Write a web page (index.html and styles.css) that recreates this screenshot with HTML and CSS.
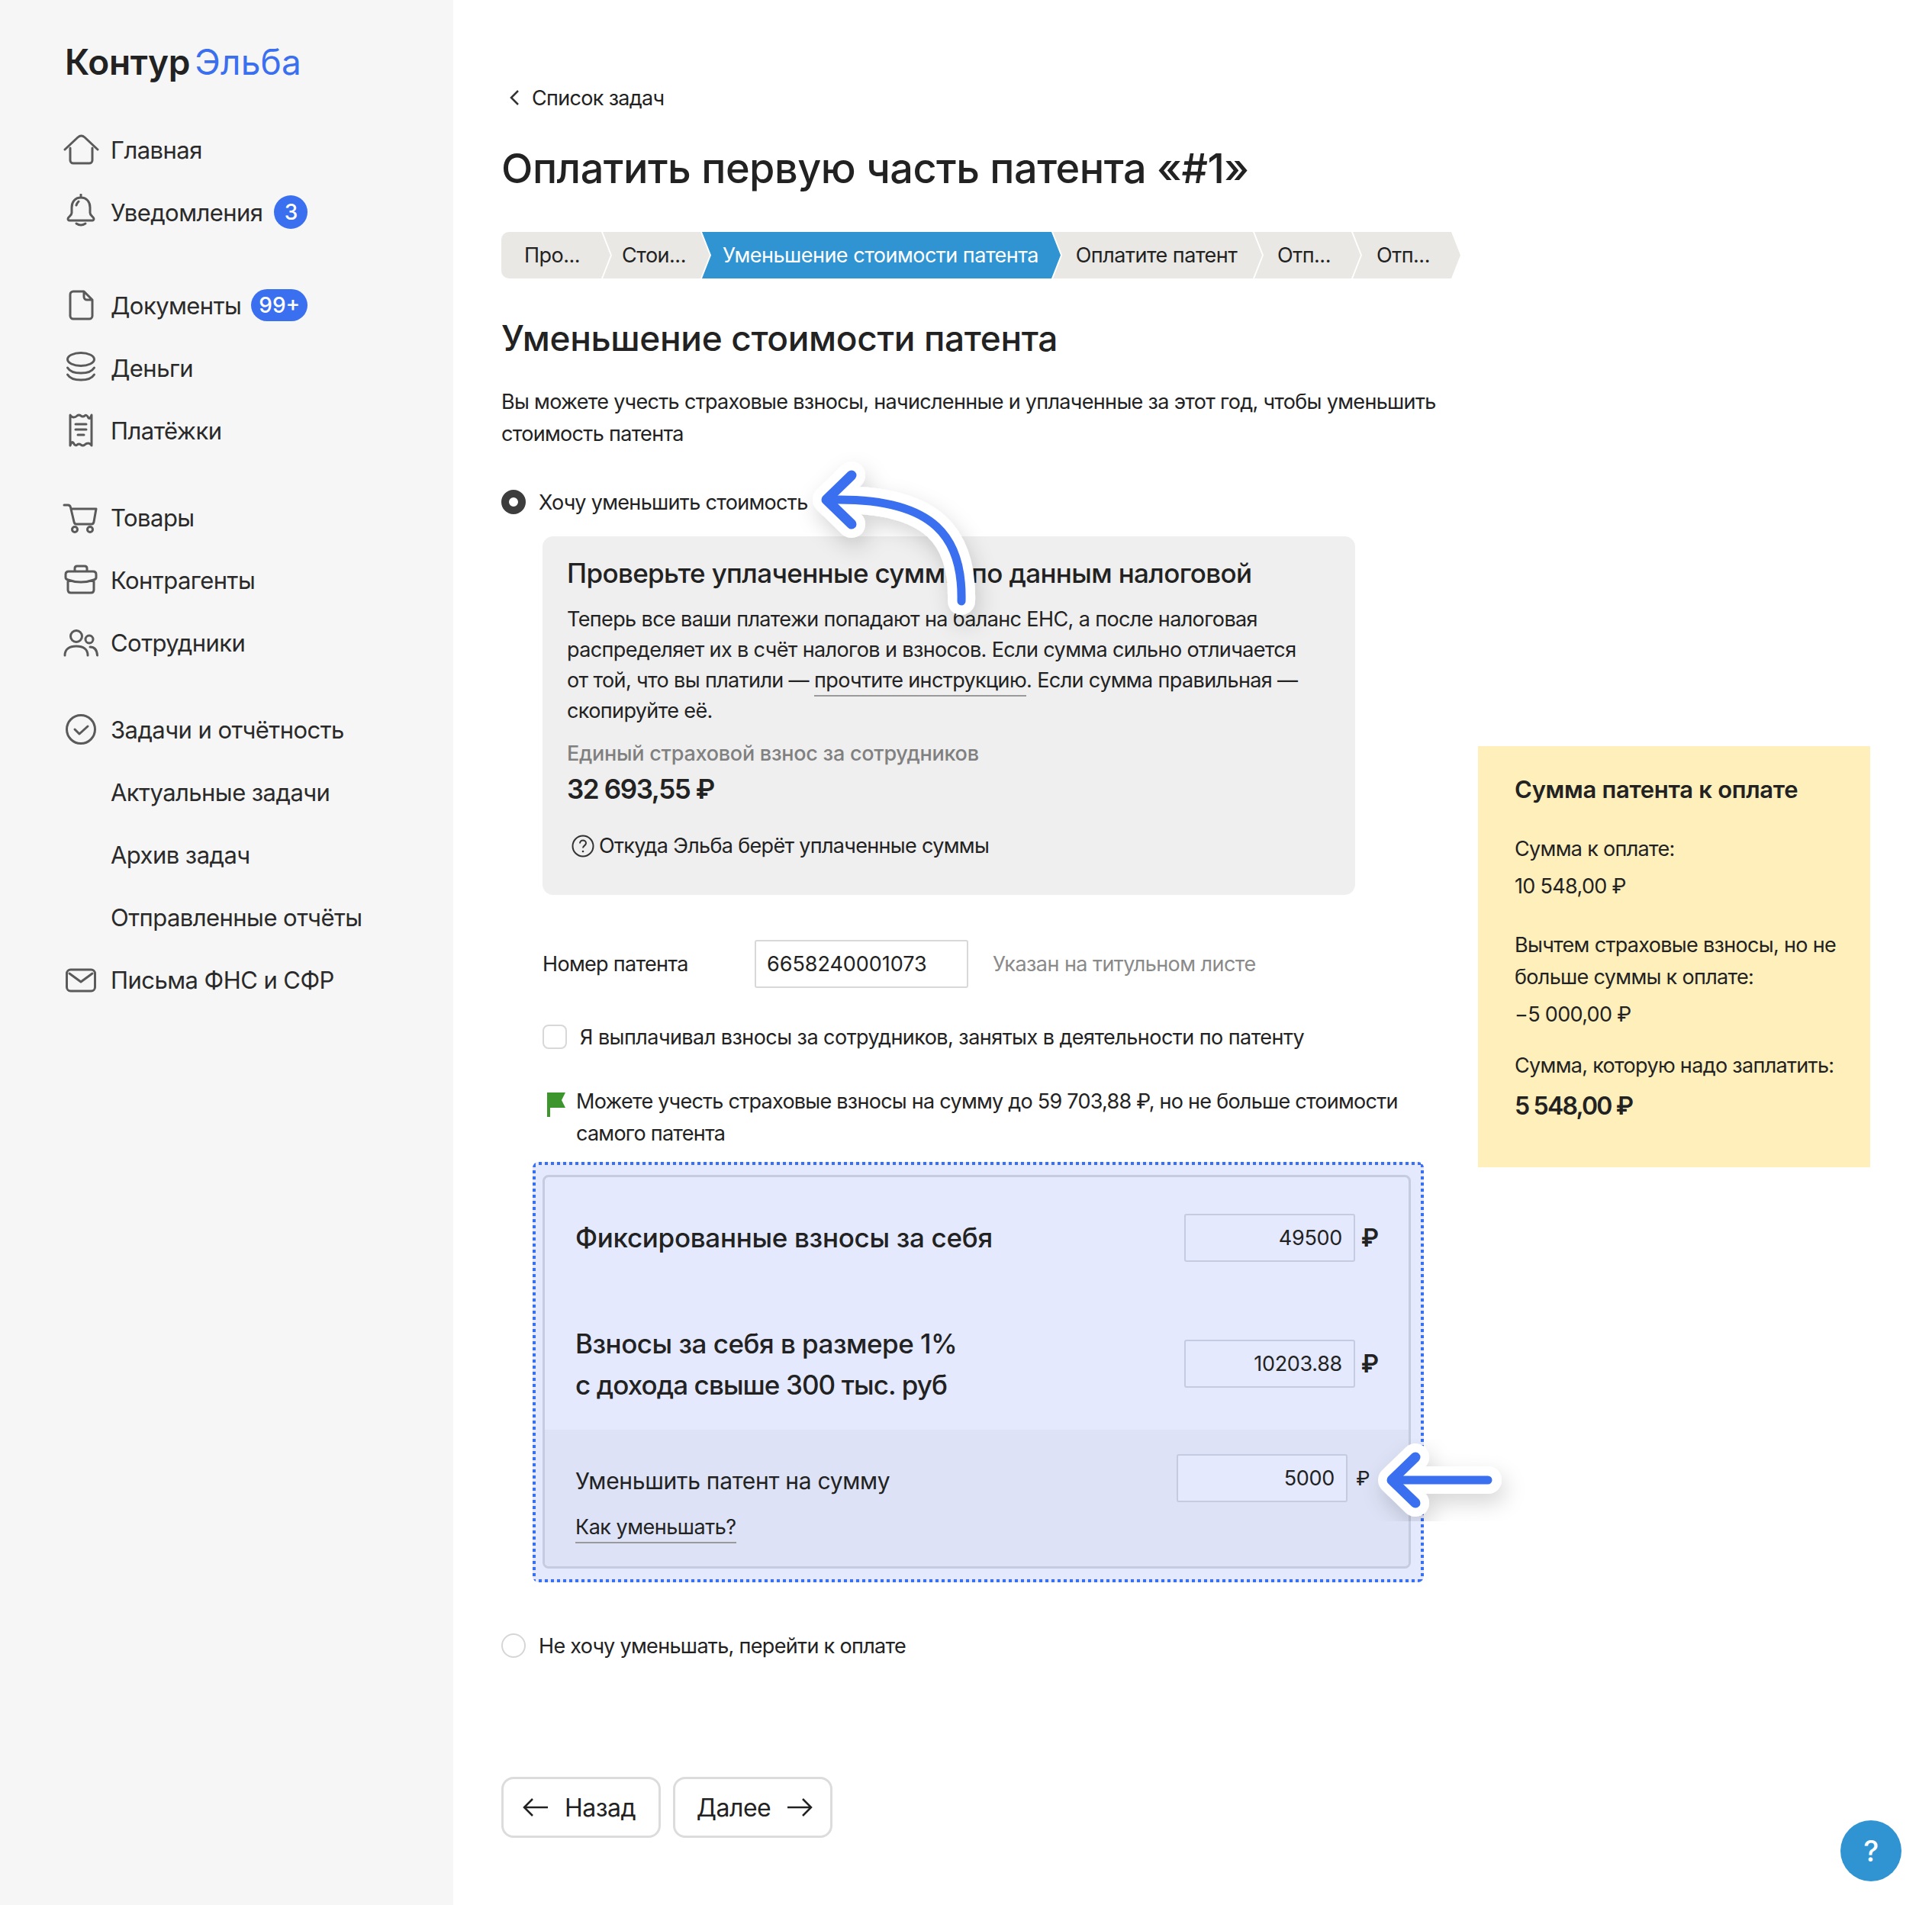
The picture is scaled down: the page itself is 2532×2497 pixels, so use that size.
FILE: index.html
```html
<!DOCTYPE html>
<html lang="ru">
<head>
<meta charset="utf-8">
<title>Контур Эльба</title>
<link rel="stylesheet" href="styles.css">
</head>
<body>
<div class="app">
  <aside class="sidebar">
    <div class="logo"><span class="logo-a">Контур</span><span class="logo-b">Эльба</span></div>
    <nav class="nav">
      <div class="nav-group">
        <a class="nav-item"><svg class="ico" viewBox="0 0 48 48"><path d="M3 24 20 8q4.500-4 9 0l17 16M10 22v16a4 4 0 0 0 4 4h21a4 4 0 0 0 4-4V22"/></svg>Главная</a>
        <a class="nav-item"><svg class="ico" viewBox="0 0 48 48"><path d="M24 1v4M24 5c-8 0-12 6-12 13v7c0 4-5 5-5 8 0 1 1 2 2 2h30c1 0 2-1 2-2 0-3-5-4-5-8v-7c0-7-4-13-12-13zM18 39q6 4 12 0M18 15q1-3 3-5"/></svg>Уведомления<span class="badge badge-round">3</span></a>
      </div>
      <div class="nav-group group-b">
        <a class="nav-item"><svg class="ico" viewBox="0 0 48 48"><path d="M14 6h14l11 11v21a4 4 0 0 1-4 4H14a4 4 0 0 1-4-4V10a4 4 0 0 1 4-4zM28 6v7a4 4 0 0 0 4 4h7"/></svg>Документы<span class="badge badge-wide">99+</span></a>
        <a class="nav-item"><svg class="ico" viewBox="0 0 48 48"><ellipse cx="24" cy="13" rx="17.500" ry="8.500"/><path d="M6.500 24c3 5 10 7 17.500 7s14.500-2 17.500-7M6.500 33c3 5 10 7 17.500 7s14.500-2 17.500-7"/></svg>Деньги</a>
        <a class="nav-item"><svg class="ico" viewBox="0 0 48 48"><path d="M10 4q2 3 4.500 3t4.500-2q2.500-2 5 0t5 0 4.500 2 4.500-3v40q-2-3-4.500-3t-4.500 2q-2.500 2-5 0t-5 0-4.500-2-4.500 3zM17 16h14M17 23h14M20 30h8"/></svg>Платёжки</a>
      </div>
      <div class="nav-group group-c">
        <a class="nav-item"><svg class="ico" viewBox="0 0 48 48"><path d="M2 8h5c2 0 3 1 3.500 3L15 30q.5 3 3 3h20q2.500 0 3-3l3-17H11"/><circle cx="16" cy="40" r="3.500"/><circle cx="36" cy="40" r="3.500"/></svg>Товары</a>
        <a class="nav-item"><svg class="ico" viewBox="0 0 48 48"><path d="M16 13V9q0-3 3-3h10q3 0 3 3v4M8 13h32q4 0 4 4v4q0 2-3 3-8 3-17 3T7 24q-3-1-3-3v-4q0-4 4-4zM7 24v13q0 4 4 4h26q4 0 4-4V24"/></svg>Контрагенты</a>
        <a class="nav-item"><svg class="ico" viewBox="0 0 48 48"><circle cx="18" cy="16" r="7.500"/><circle cx="35" cy="20" r="5"/><path d="M3 41c0-8 6-12 15-12s15 4 15 12M36 30c6 0 9 4 9.500 11"/></svg>Сотрудники</a>
      </div>
      <div class="nav-group group-d">
        <a class="nav-item"><svg class="ico" viewBox="0 0 48 48"><circle cx="24" cy="24" r="18.500"/><path d="M16 24l6 6 11-10"/></svg>Задачи и отчётность</a>
        <a class="nav-item sub">Актуальные задачи</a>
        <a class="nav-item sub">Архив задач</a>
        <a class="nav-item sub">Отправленные отчёты</a>
        <a class="nav-item"><svg class="ico" viewBox="0 0 48 48"><rect x="5.500" y="11" width="37" height="28" rx="5"/><path d="M9 16l15 11 15-11"/></svg>Письма ФНС и СФР</a>
      </div>
    </nav>
  </aside>

  <main class="main">
    <section class="content">
      <a class="back"><svg class="back-ico" viewBox="0 0 14 24"><path d="M12 3 3 12l9 9"/></svg>Список задач</a>
      <h1 class="title">Оплатить первую часть патента «#1»</h1>
      <div class="steps">
        <div class="step first s143">Про...</div>
        <div class="step s140 pr">Стои...</div>
        <div class="step active s470">Уменьшение стоимости патента</div>
        <div class="step s274 pr-s">Оплатите патент</div>
        <div class="step s139 pr-l">Отп...</div>
        <div class="step s141 pr-l">Отп...</div>
      </div>
      <h2 class="subtitle">Уменьшение стоимости патента</h2>
      <p class="intro">Вы можете учесть страховые взносы, начисленные и уплаченные за этот год, чтобы уменьшить стоимость патента</p>
      <label class="radio-row"><span class="radio on"></span>Хочу уменьшить стоимость</label>

      <div class="info">
        <h3 class="info-title">Проверьте уплаченные суммы по данным налоговой</h3>
        <p class="info-body">Теперь все ваши платежи попадают на баланс ЕНС, а после налоговая распределяет их в счёт налогов и взносов. Если сумма сильно отличается от той, что вы платили — <a class="link">прочтите инструкцию</a>. Если сумма правильная — скопируйте её.</p>
        <div class="info-label">Единый страховой взнос за сотрудников</div>
        <div class="info-amount">32 693,55 ₽</div>
        <div class="info-help"><svg class="help-ico" viewBox="0 0 32 32"><circle cx="16" cy="16" r="13.500"/><path d="M12 12.500c0-2.500 2-4 4-4s4 1.500 4 3.800c0 3-4 3.200-4 6.200"/><circle class="dot" cx="16" cy="23" r="1.300"/></svg>Откуда Эльба берёт уплаченные суммы</div>
      </div>

      <div class="patent">
        <span class="patent-label">Номер патента</span>
        <span class="input patent-input">6658240001073</span>
        <span class="hint">Указан на титульном листе</span>
      </div>
      <label class="check-row"><span class="check"></span>Я выплачивал взносы за сотрудников, занятых в деятельности по патенту</label>
      <div class="flag-row">
        <svg class="flag" viewBox="0 0 26 34"><path d="M1 1h24l-5 10 5 10H5v12H1z"/></svg>
        <p class="flag-text">Можете учесть страховые взносы на сумму до 59 703,88 ₽, но не больше стоимости самого патента</p>
      </div>

      <div class="dotted">
        <div class="calc">
          <div class="calc-row r1">
            <div class="calc-label">Фиксированные взносы за себя</div>
            <div class="field"><span class="input num">49500</span><span class="cur">₽</span></div>
          </div>
          <div class="calc-row r2">
            <div class="calc-label tighter">Взносы за себя в размере 1%<br><span class="tight">с дохода свыше 300 тыс. руб</span></div>
            <div class="field"><span class="input num">10203.88</span><span class="cur">₽</span></div>
          </div>
          <div class="calc-foot">
            <div class="foot-text">
              <div class="foot-label">Уменьшить патент на сумму</div>
              <a class="link foot-link">Как уменьшать?</a>
            </div>
            <div class="field small"><span class="input num light">5000</span><span class="cur thin">₽</span></div>
          </div>
        </div>
      </div>

      <label class="radio-row second"><span class="radio"></span>Не хочу уменьшать, перейти к оплате</label>

      <div class="buttons">
        <button class="btn btn-back"><svg class="arr" viewBox="0 0 36 28"><path d="M14 3 3 14l11 11M3 14h31"/></svg>Назад</button>
        <button class="btn btn-next"><span>Далее</span><svg class="arr" viewBox="0 0 36 28"><path d="M22 3l11 11-11 11M33 14H2"/></svg></button>
      </div>
    </section>

    <aside class="sum">
      <h3 class="sum-title">Сумма патента к оплате</h3>
      <p class="sum-line l1">Сумма к оплате:</p>
      <p class="sum-line l2">10 548,00 ₽</p>
      <p class="sum-line l3">Вычтем страховые взносы, но не больше суммы к оплате:</p>
      <p class="sum-line l2">−5 000,00 ₽</p>
      <p class="sum-line l4">Сумма, которую надо заплатить:</p>
      <p class="sum-total">5 548,00 ₽</p>
    </aside>
  </main>
</div>

<svg class="overlay" viewBox="0 0 2532 2497" aria-hidden="true">
  <defs><filter id="sh" x="-40%" y="-40%" width="180%" height="180%"><feDropShadow dx="5" dy="12" stdDeviation="14" flood-color="#000" flood-opacity=".16"/></filter></defs>
  <path class="ow" filter="url(#sh)" d="M1260 788C1262 705 1225 655 1100 655H1083M1116 623 1083 655 1116 687"/>
  <path class="ob" d="M1260 788C1262 705 1225 655 1100 655H1087"/>
  <path class="oh" d="M1116 623 1083 655 1116 687"/>
  <path class="ow" filter="url(#sh)" d="M1950 1940H1824M1855 1910 1824 1940 1855 1970"/>
  <path class="ob" d="M1950 1940H1830"/>
  <path class="oh" d="M1855 1910 1824 1940 1855 1970"/>
</svg>
<div class="help-fab">?</div>
</body>
</html>
```
FILE: styles.css
```css
* { box-sizing: border-box; }
html, body { margin: 0; padding: 0; }
body { position: relative; width: 2532px; height: 2497px; background: #fff; color: #222; font-family: Inter, "Noto Sans", sans-serif; font-size: 27px; letter-spacing: -0.68px; overflow: hidden; }
h1, h2, h3, p { margin: 0; font-weight: inherit; }
.app { display: flex; height: 2497px; }

.sidebar { width: 594px; flex: none; background: #f6f6f6; padding: 52px 0 0 85px; }
.logo { display: flex; gap: 6px; height: 58px; align-items: center; font-size: 46px; letter-spacing: -0.3px; }
.logo-a { font-weight: 600; color: #222; }
.logo-b { font-weight: 400; color: #3a6ff0; letter-spacing: 0.2px; }
.nav { margin-top: 45px; }
.group-b { margin-top: 40px; }
.group-c { margin-top: 32px; }
.group-d { margin-top: 32px; }
.nav-item { display: flex; align-items: center; height: 82px; font-size: 31px; letter-spacing: -0.55px; color: #2a2a2a; position: relative; padding-left: 60px; }
.ico { position: absolute; left: -3px; top: 17px; width: 48px; height: 48px; fill: none; stroke: #5a5a5a; stroke-width: 3; stroke-linecap: round; stroke-linejoin: round; }
.badge { margin-left: 15px; height: 42px; padding: 0 10px; border-radius: 21px; background: #3a6ff0; color: #fff; font-size: 28px; font-weight: 500; letter-spacing: 0; display: inline-flex; align-items: center; justify-content: center; }
.badge-round { width: 44px; height: 44px; padding: 0; border-radius: 50%; }
.badge-wide { margin-left: 13px; }

.main { flex: 1; display: flex; align-items: flex-start; padding-left: 63px; }
.content { width: 1256px; flex: none; padding-top: 108px; }
.back { display: flex; align-items: center; height: 40px; }
.back-ico { width: 14px; height: 24px; margin: 0 16px 0 10px; fill: none; stroke: #333; stroke-width: 2.500; }
.title { margin-top: 38px; font-size: 54px; line-height: 70px; font-weight: 500; letter-spacing: -0.5px; color: #222; }
.steps { display: flex; margin-top: 48px; height: 61px; }
.step { height: 61px; flex: none; display: flex; align-items: center; justify-content: center; background: #e9e8e4; color: #222; letter-spacing: -0.5px; margin-left: -10px; clip-path: polygon(0 0, calc(100% - 12px) 0, 100% 50%, calc(100% - 12px) 100%, 0 100%, 12px 50%); }
.step.pr { padding-right: 6px; }
.step.pr-s { padding-right: 3px; }
.step.pr-l { padding-right: 9px; }
.step.first { margin-left: 0; padding-right: 10px; border-radius: 10px 0 0 10px; clip-path: polygon(0 0, calc(100% - 12px) 0, 100% 50%, calc(100% - 12px) 100%, 0 100%); }
.step.active { background: #3094d2; color: #fff; padding-right: 2px; }
.s143 { width: 143px; } .s140 { width: 140px; } .s470 { width: 470px; } .s274 { width: 274px; } .s139 { width: 139px; } .s141 { width: 141px; }
.subtitle { margin-top: 50px; font-size: 46px; line-height: 56px; font-weight: 500; letter-spacing: -0.35px; }
.intro { margin-top: 35px; line-height: 42px; width: 1256px; }

.radio-row { display: flex; align-items: center; height: 42px; margin-top: 47px; }
.radio { width: 32px; height: 32px; border-radius: 50%; border: 2px solid #d6d6d6; margin-right: 17px; flex: none; }
.radio.on { border: 10px solid #3d3d3d; background: #fff; }
.radio-row.second { margin-top: 62px; }

.info { margin: 24px 0 0 54px; width: 1065px; height: 470px; background: #efefef; border-radius: 14px; padding: 25px 32px 0; }
.info-title { font-size: 35px; line-height: 46px; font-weight: 500; letter-spacing: -0.65px; }
.info-body { margin-top: 18px; line-height: 40px; width: 975px; letter-spacing: -0.62px; }
.link { border-bottom: 2px solid #9a9a9a; padding-bottom: 3px; }
.info-label { margin-top: 16px; line-height: 40px; color: #808080; font-weight: 500; letter-spacing: -0.25px; }
.info-amount { margin-top: 3px; font-size: 35px; line-height: 46px; font-weight: 600; letter-spacing: -1.4px; }
.info-help { margin-top: 32px; line-height: 40px; display: flex; align-items: center; padding-left: 5px; }
.help-ico { width: 32px; height: 32px; margin-right: 5px; fill: none; stroke: #333; stroke-width: 2; }
.help-ico .dot { fill: #333; stroke: none; }

.patent { display: flex; align-items: center; margin: 59px 0 0 54px; }
.patent-label { width: 278px; }
.input { display: flex; align-items: center; height: 63px; border: 2px solid #d8d8d8; border-radius: 3px; }
.patent-input { width: 280px; padding-left: 14px; letter-spacing: -0.05px; }
.hint { margin-left: 32px; color: #8a8a8a; letter-spacing: -0.55px; }
.check-row { display: flex; align-items: center; height: 42px; margin: 43px 0 0 54px; letter-spacing: -0.54px; }
.check { width: 32px; height: 32px; border: 2px solid #d8d8d8; border-radius: 8px; margin-right: 17px; flex: none; }
.flag-row { display: flex; margin: 43px 0 0 54px; width: 1180px; }
.flag { width: 26px; height: 34px; margin: 8px 13px 0 5px; flex: none; fill: #3c962d; }
.flag-text { line-height: 42px; flex: 1; letter-spacing: -0.74px; }

.dotted { margin: 16px 0 0 41px; width: 1168px; height: 551px; border-radius: 8px; padding: 17px 17px 18px 13px; background:
  repeating-linear-gradient(90deg, #3a6ff0 0 4px, transparent 4px 8px) top / 100% 4px no-repeat,
  repeating-linear-gradient(90deg, #3a6ff0 0 4px, transparent 4px 8px) bottom / 100% 4px no-repeat,
  repeating-linear-gradient(0deg, #3a6ff0 0 4px, transparent 4px 8px) left / 4px 100% no-repeat,
  repeating-linear-gradient(0deg, #3a6ff0 0 4px, transparent 4px 8px) right / 4px 100% no-repeat,
  #e4e9fd; }
.calc { height: 100%; border: 3px solid #c5cbe0; border-radius: 8px; display: flex; flex-direction: column; overflow: hidden; }
.calc-row { display: flex; align-items: center; justify-content: space-between; padding: 0 32px 0 40px; }
.r1 { height: 158px; }
.r2 { height: 173px; }
.calc-label { font-size: 35px; line-height: 54px; font-weight: 500; letter-spacing: -0.3px; }
.calc-label.tighter { letter-spacing: -0.5px; }
.tight { letter-spacing: -0.92px; }
.field { display: flex; align-items: center; }
.num { width: 224px; justify-content: flex-end; padding-right: 15px; border-color: #c5cbe0; letter-spacing: -0.3px; }
.cur { width: 38px; text-align: center; font-size: 32px; font-weight: 600; }
.calc-foot { flex: 1; background: #dde2f6; display: flex; justify-content: space-between; align-items: flex-start; padding: 32px 40px 0 40px; }
.foot-label { line-height: 42px; margin-top: 14px; font-size: 30px; letter-spacing: -0.3px; }
.foot-link { display: inline-block; margin-top: 22px; line-height: 36px; padding-bottom: 1px; letter-spacing: -0.5px; }
.light { background: #e4e9fd; }
.thin { width: 40px; font-size: 26px; font-weight: 400; }

.buttons { display: flex; gap: 16px; margin-top: 151px; }
.btn { width: 209px; height: 80px; border: 3px solid #dcdcdc; border-radius: 16px; background: #fff; font: inherit; font-size: 32px; letter-spacing: -0.5px; color: #222; display: flex; align-items: center; justify-content: center; gap: 20px; padding: 0; }
.btn-back { padding-right: 6px; }
.btn-next { padding-left: 6px; }
.arr { width: 36px; height: 28px; fill: none; stroke: #222; stroke-width: 2.500; }

.sum { width: 514px; margin: 978px 0 0 24px; height: 552px; background: #feefbb; padding: 34px 16px 0 48px; }
.sum-title { font-size: 31px; line-height: 46px; font-weight: 600; letter-spacing: -0.3px; }
.sum-line { line-height: 42px; }
.l1 { margin-top: 34px; }
.l2 { margin-top: 7px; }
.l3 { margin-top: 35px; }
.l4 { margin-top: 25px; }
.sum-total { margin-top: 9px; font-size: 32px; line-height: 46px; font-weight: 600; letter-spacing: -1.8px; }

.overlay { position: absolute; left: 0; top: 0; width: 2532px; height: 2497px; pointer-events: none; fill: none; stroke-linecap: round; stroke-linejoin: round; }
.ow { stroke: #fff; stroke-width: 36; }
.ob { stroke: #3a6ff0; stroke-width: 11; }
.oh { stroke: #3a6ff0; stroke-width: 13; }
.help-fab { position: absolute; left: 2412px; top: 2386px; width: 80px; height: 80px; border-radius: 50%; background: #3094d2; color: #fff; font-size: 38px; font-weight: 500; display: flex; align-items: center; justify-content: center; }
```
